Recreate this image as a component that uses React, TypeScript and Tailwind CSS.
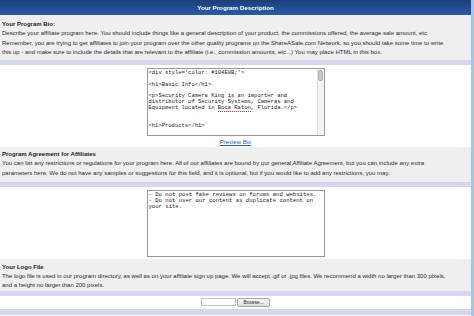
import React from "react";

const Band = () => <div className="h-[4.5px] bg-[#d6d6f1]" />;

function Section({ title, lines, pt, pb }: { title: string; lines: string[]; pt: string; pb: string }) {
  return (
    <div className={`bg-[#efefef] px-[2px] ${pt} ${pb}`}>
      <div className="font-bold leading-[9.3px] text-[#222] whitespace-nowrap">{title}</div>
      {lines.map((l, i) => (
        <div key={i} className="leading-[9.3px] text-[#2a2a2a] whitespace-nowrap">{l}</div>
      ))}
    </div>
  );
}

export default function App() {
  return (
    <div
      className="w-[474px] h-[316px] overflow-hidden bg-white border-r-[3px] border-[#a9c2df] text-[6px]"
      style={{ fontFamily: '"Liberation Sans", Arial, sans-serif' }}
    >
      <div className="h-[15px] bg-gradient-to-b from-[#1b3f7d] to-[#2a5ca3] flex items-center justify-center text-white font-bold text-[6.2px]">
        Your Program Description
      </div>
      <Section
        pt="pt-[5px]"
        pb="pb-[3px]"
        title="Your Program Bio:"
        lines={[
          "Describe your affiliate program here. You should include things like a general description of your product, the commissions offered, the average sale amount, etc.",
          "Remember, you are trying to get affiliates to join your program over the other quality programs on the ShareASale.com Network, so you should take some time to write",
          "this up - and make sure to include the details that are relevant to the affiliate (i.e., commission amounts, etc...) You may place HTML in this box.",
        ]}
      />
      <Band />
      <div className="bg-white pt-[3px] pb-[0.5px] flex flex-col items-center">
        <div
          className="relative w-[178px] h-[68px] border border-[#9a9a9a] bg-white overflow-hidden text-[5.5px] leading-[5.9px] text-[#222] pl-[1px] pt-[1px]"
          style={{ fontFamily: '"Liberation Mono", "Courier New", monospace' }}
        >
          <div className="whitespace-pre">{"<div style='color: #104E8B;'>"}</div>
          <div>&nbsp;</div>
          <div className="whitespace-pre">{"<h1>Basic Info</h1>"}</div>
          <div>&nbsp;</div>
          <div className="whitespace-pre">{"<p>Security Camera King is an importer and"}</div>
          <div className="whitespace-pre">{"distributor of Security Systems, Cameras and"}</div>
          <div className="whitespace-pre">
            {"Equipment located in "}
            <span className="border-b border-dotted border-[#e03030]">Boca Raton</span>
            {", Florida.</p>"}
          </div>
          <div>&nbsp;</div>
          <div>&nbsp;</div>
          <div className="whitespace-pre">{"<h1>Products</h1>"}</div>
          <div className="absolute right-0 top-0 bottom-0 w-[7px] bg-[#f4f4f4] border-l border-[#dedede]">
            <div className="mx-auto mt-[1px] w-[5px] h-[11px] rounded-[2px] bg-[#c9c9c9] border border-[#b0b0b0]" />
          </div>
        </div>
        <div className="mt-[2px] leading-[9px] text-[#2a5db0] underline">Preview Bio</div>
      </div>
      <Section
        pt="pt-[3px]"
        pb="pb-[4px]"
        title="Program Agreement for Affiliates"
        lines={[
          "You can list any restrictions or regulations for your program here. All of our affiliates are bound by our general Affiliate Agreement, but you can include any extra",
          "parameters here. We do not have any samples or suggestions for this field, and it is optional, but if you would like to add any restrictions, you may.",
        ]}
      />
      <Band />
      <div className="bg-white pt-[3.5px] pb-[2px] flex justify-center">
        <div
          className="w-[178px] h-[67px] border border-[#9a9a9a] bg-white overflow-hidden text-[5.6px] leading-[6.1px] text-[#222] pl-[1px] pt-[0.5px]"
          style={{ fontFamily: '"Liberation Mono", "Courier New", monospace' }}
        >
          <div className="whitespace-pre">{"- Do not post fake reviews on forums and websites."}</div>
          <div className="whitespace-pre">{"- Do not user our content as duplicate content on"}</div>
          <div className="whitespace-pre">{"your site."}</div>
        </div>
      </div>
      <Section
        pt="pt-[3.5px]"
        pb="pb-[1px]"
        title="Your Logo File"
        lines={[
          "The logo file is used in our program directory, as well as on your affiliate sign up page. We will accept .gif or .jpg files. We recommend a width no larger than 300 pixels,",
          "and a height no larger than 200 pixels.",
        ]}
      />
      <Band />
      <div className="bg-white h-[13px] flex items-center justify-center">
        <div className="w-[35px] h-[8px] border border-[#c4c4c4] bg-white" />
        <div className="ml-[1px] w-[33px] h-[9px] rounded-[2px] border border-[#a8a8a8] bg-gradient-to-b from-[#fafafa] to-[#dcdcdc] flex items-center justify-center text-[4.8px] text-[#222]">
          Browse...
        </div>
      </div>
      <div className="h-[6px] bg-[#d6d6f1]" />
    </div>
  );
}
